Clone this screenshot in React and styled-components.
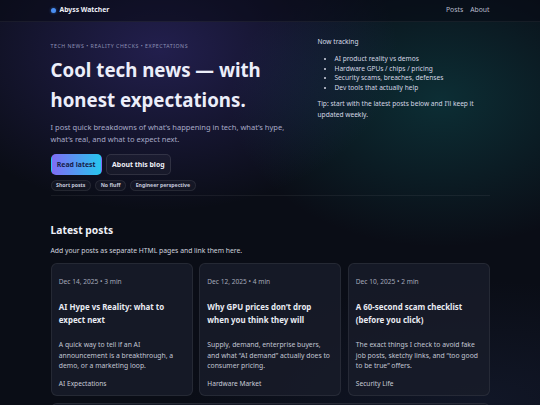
import React from 'react';
import styled, { createGlobalStyle } from 'styled-components';

const GlobalStyle = createGlobalStyle`
  html, body {
    margin: 0;
    padding: 0;
  }
  body {
    min-height: 405px;
    font-family: "Noto Sans", "Open Sans", sans-serif;
    line-height: 1.6;
    color: #e8eaf4;
    background:
      radial-gradient(340px 230px at 160px 50px, rgba(90, 72, 205, 0.3), transparent 70%),
      radial-gradient(300px 210px at 440px 100px, rgba(18, 135, 135, 0.27), transparent 70%),
      radial-gradient(420px 170px at 480px 400px, rgba(30, 40, 70, 0.35), transparent 70%),
      #0a0d16;
  }
  * { box-sizing: border-box; }
`;

const Container = styled.div`
  width: 439px;
  margin: 0 auto;
`;

const Header = styled.header`
  height: 22px;
  background: rgba(8, 10, 20, 0.55);
  border-bottom: 1px solid rgba(255, 255, 255, 0.06);
`;

const HeaderInner = styled(Container)`
  height: 100%;
  display: flex;
  align-items: center;
  justify-content: space-between;
`;

const Brand = styled.div`
  display: flex;
  align-items: center;
  gap: 4px;
  font-size: 6.8px;
  font-weight: 700;
  color: #eef0f8;
`;

const Dot = styled.span`
  width: 5px;
  height: 5px;
  border-radius: 50%;
  background: #4a8ef2;
  box-shadow: 0 0 3px rgba(74, 142, 242, 0.6);
`;

const Nav = styled.nav`
  display: flex;
  gap: 7px;
  font-size: 6.8px;
  color: #b7bbcc;
`;

const Hero = styled(Container)`
  display: grid;
  grid-template-columns: 249px 1fr;
  column-gap: 18px;
  padding-top: 15px;
`;

const HeroMain = styled.div`
  padding-top: 4.5px;
`;

const Kicker = styled.div`
  font-size: 5.25px;
  letter-spacing: 0.1em;
  line-height: 8.5px;
  text-transform: uppercase;
  color: #8d91b4;
`;

const Title = styled.h1`
  margin: 5px 0 0;
  font-size: 18.7px;
  line-height: 30px;
  font-weight: 700;
  color: #eceefa;
`;

const Lead = styled.p`
  margin: 7px 0 0;
  font-size: 7.55px;
  line-height: 11.8px;
  color: #a7a9c6;
`;

const Actions = styled.div`
  display: flex;
  gap: 4px;
  margin-top: 8px;
`;

const Button = styled.a`
  display: inline-flex;
  align-items: center;
  height: 21px;
  padding: 0 5.3px;
  border-radius: 5px;
  font-size: 6.9px;
  font-weight: 700;
  text-decoration: none;
  color: ${p => (p.$primary ? '#16204a' : '#eef0f8')};
  background: ${p =>
    p.$primary ? 'linear-gradient(90deg, #7f6df5, #27c6ee)' : 'rgba(255, 255, 255, 0.035)'};
  border: 1px solid ${p => (p.$primary ? 'transparent' : 'rgba(255, 255, 255, 0.1)')};
`;

const Chips = styled.div`
  display: flex;
  gap: 4px;
  margin-top: 5px;
`;

const Chip = styled.span`
  display: inline-flex;
  align-items: center;
  height: 11px;
  padding: 0 4.6px;
  border-radius: 999px;
  font-size: 5.2px;
  font-weight: 700;
  color: #c4c7da;
  background: rgba(255, 255, 255, 0.03);
  border: 1px solid rgba(255, 255, 255, 0.08);
`;

const Aside = styled.aside`
  font-size: 6.6px;
  line-height: 10.4px;
  color: #d4d7e4;
`;

const AsideTitle = styled.div`
  color: #d9dce8;
`;

const TrackList = styled.ul`
  margin: 7px 0 0;
  padding-left: 17px;
  line-height: 9.5px;
`;

const Tip = styled.p`
  margin: 7px 0 0;
`;

const Divider = styled(Container)`
  height: 1px;
  margin-top: 4px;
  background: rgba(255, 255, 255, 0.06);
`;

const Section = styled(Container)`
  padding-top: 26px;
`;

const SectionTitle = styled.h2`
  margin: 0;
  font-size: 10.3px;
  line-height: 16px;
  font-weight: 700;
  color: #eef0f8;
`;

const SectionNote = styled.p`
  margin: 7.5px 0 0;
  font-size: 6.8px;
  line-height: 11px;
  color: #d0d3df;
`;

const Grid = styled.div`
  display: grid;
  grid-template-columns: repeat(3, 1fr);
  gap: 6.5px;
  margin-top: 6.5px;
`;

const Card = styled.article`
  display: flex;
  flex-direction: column;
  padding: 13px 7.3px 6px;
  border-radius: 6px;
  background: rgba(24, 28, 42, 0.82);
  border: 1px solid rgba(255, 255, 255, 0.07);
`;

const Meta = styled.div`
  font-size: 6.6px;
  line-height: 10.3px;
  color: #a4a8b9;
`;

const CardTitle = styled.h3`
  margin: 14.5px 0 0;
  font-size: 7.9px;
  line-height: 13px;
  font-weight: 700;
  color: #e9ebf3;
`;

const CardText = styled.p`
  margin: 13px 0 0;
  font-size: 6.8px;
  line-height: 10.5px;
  color: #c2c6d3;
`;

const Tag = styled.div`
  margin-top: 7px;
  font-size: 6.6px;
  line-height: 10.5px;
  color: #c8cbd6;
`;

const MoreBox = styled.div`
  height: 40px;
  margin-top: 7px;
  border-radius: 6px;
  background: rgba(24, 28, 42, 0.82);
  border: 1px solid rgba(255, 255, 255, 0.07);
`;

const posts = [
  {
    meta: 'Dec 14, 2025 • 3 min',
    title: 'AI Hype vs Reality: what to expect next',
    text: 'A quick way to tell if an AI announcement is a breakthrough, a demo, or a marketing loop.',
    tag: 'AI Expectations',
  },
  {
    meta: 'Dec 12, 2025 • 4 min',
    title: 'Why GPU prices don’t drop when you think they will',
    text: 'Supply, demand, enterprise buyers, and what “AI demand” actually does to consumer pricing.',
    tag: 'Hardware Market',
  },
  {
    meta: 'Dec 10, 2025 • 2 min',
    title: 'A 60-second scam checklist (before you click)',
    text: 'The exact things I check to avoid fake job posts, sketchy links, and “too good to be true” offers.',
    tag: 'Security Life',
  },
];

const App = () => {
  return (
    <>
      <GlobalStyle />
      <Header>
        <HeaderInner>
          <Brand>
            <Dot />
            Abyss Watcher
          </Brand>
          <Nav>
            <span>Posts</span>
            <span>About</span>
          </Nav>
        </HeaderInner>
      </Header>

      <Hero>
        <HeroMain>
          <Kicker>Tech news • Reality checks • Expectations</Kicker>
          <Title>Cool tech news — with honest expectations.</Title>
          <Lead>
            I post quick breakdowns of what’s happening in tech, what’s hype, what’s real, and what
            to expect next.
          </Lead>
          <Actions>
            <Button $primary>Read latest</Button>
            <Button>About this blog</Button>
          </Actions>
          <Chips>
            <Chip>Short posts</Chip>
            <Chip>No fluff</Chip>
            <Chip>Engineer perspective</Chip>
          </Chips>
        </HeroMain>
        <Aside>
          <AsideTitle>Now tracking</AsideTitle>
          <TrackList>
            <li>AI product reality vs demos</li>
            <li>Hardware GPUs / chips / pricing</li>
            <li>Security scams, breaches, defenses</li>
            <li>Dev tools that actually help</li>
          </TrackList>
          <Tip>Tip: start with the latest posts below and I’ll keep it updated weekly.</Tip>
        </Aside>
      </Hero>

      <Divider />

      <Section>
        <SectionTitle>Latest posts</SectionTitle>
        <SectionNote>Add your posts as separate HTML pages and link them here.</SectionNote>
        <Grid>
          {posts.map(post => (
            <Card key={post.title}>
              <Meta>{post.meta}</Meta>
              <CardTitle>{post.title}</CardTitle>
              <CardText>{post.text}</CardText>
              <Tag>{post.tag}</Tag>
            </Card>
          ))}
        </Grid>
        <MoreBox />
      </Section>
    </>
  );
};

export default App;
